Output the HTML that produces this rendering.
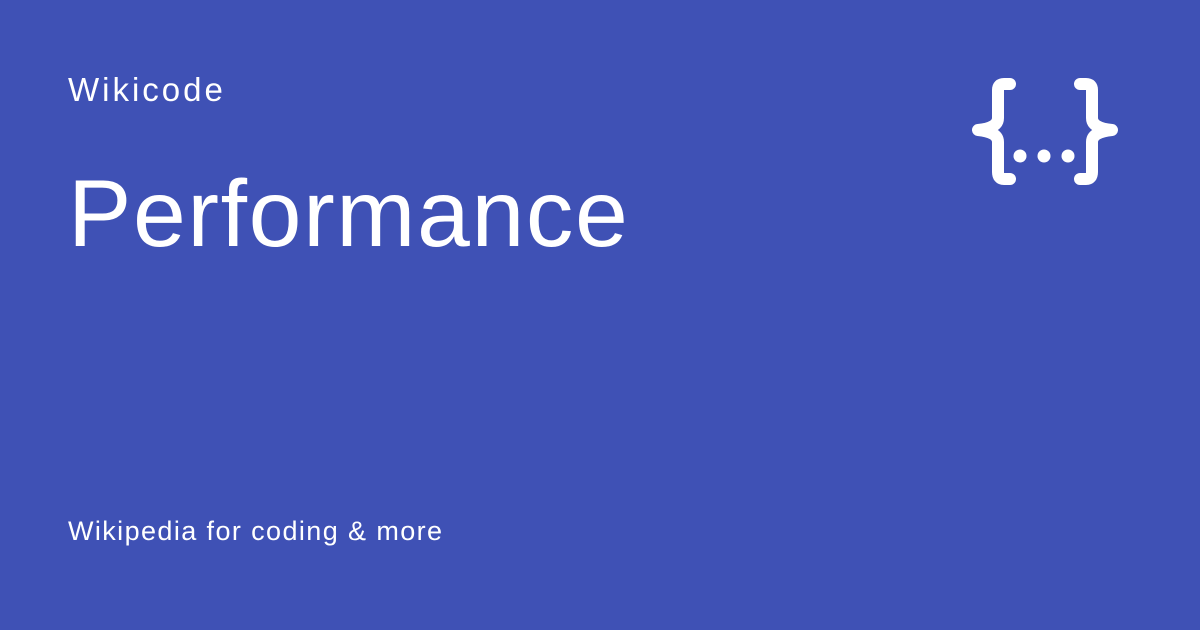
<!DOCTYPE html>
<html><head><style>
body{margin:0;width:1200px;height:630px;background:#3f51b5;font-family:"Liberation Sans",sans-serif;color:#fff;position:relative;overflow:hidden}
.a{position:absolute;left:68px;white-space:nowrap}
</style></head><body>
<div class="a" style="top:71px;font-size:33px;letter-spacing:3px">Wikicode</div>
<div class="a" style="top:160px;font-size:95px;letter-spacing:1.6px">Performance</div>
<div class="a" style="top:516px;font-size:27px;letter-spacing:1.4px">Wikipedia for coding &amp; more</div>
<svg style="position:absolute;left:960px;top:70px" width="170" height="130" viewBox="0 0 170 130">
<g fill="none" stroke="#fff" stroke-width="12" stroke-linejoin="round" stroke-linecap="round">
<path d="M50 14 H44 Q38 14 38 20 V48 Q38 58 18 60 Q38 62 38 72 V102 Q38 109 44 109 H50"/>
<path d="M120 14 H126 Q132 14 132 20 V48 Q132 58 152 60 Q132 62 132 72 V102 Q132 109 126 109 H120"/>
</g>
<g fill="#fff"><circle cx="60" cy="86" r="6.5"/><circle cx="84" cy="86" r="6.5"/><circle cx="108" cy="86" r="6.5"/></g>
</svg>
</body></html>
